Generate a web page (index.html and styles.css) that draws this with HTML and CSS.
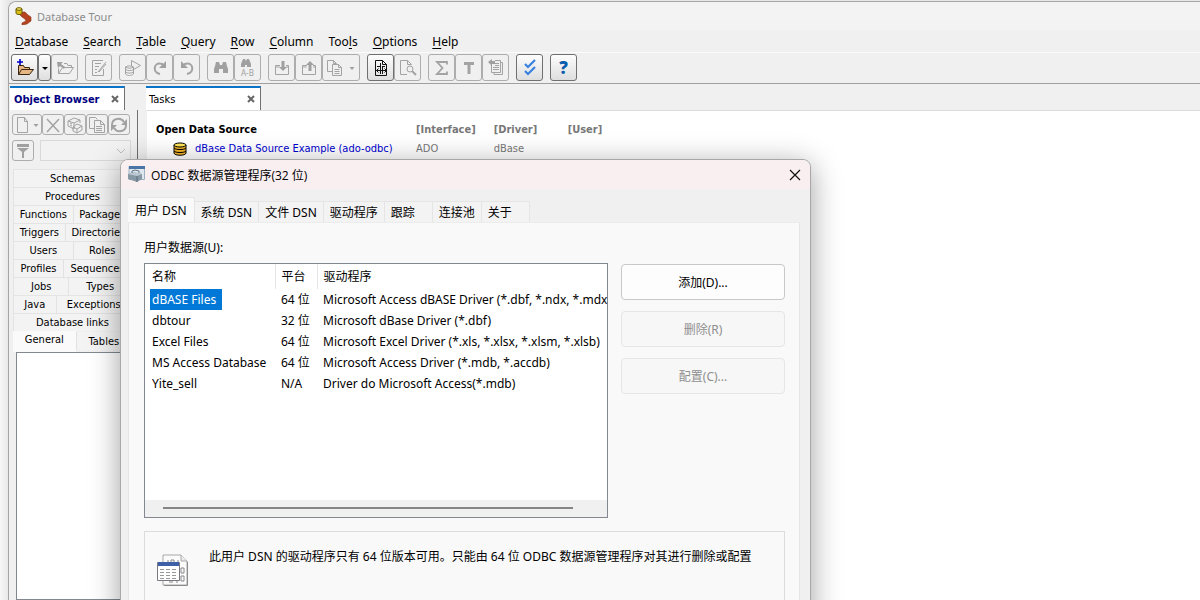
FILE: index.html
```html
<!DOCTYPE html>
<html lang="zh-CN">
<head>
    <meta charset="UTF-8">
    <meta name="viewport" content="width=device-width, initial-scale=1.0">
    <title>Database Tour</title>
    <link rel="stylesheet" href="styles.css">
</head>
<body>
    <div class="app">
        <header class="titlebar">
            <svg width="18" height="18" viewBox="0 0 18 18">
                <path d="M6 5h4l3 3 3 2v4l-4 3-5 1v-2l4-2-1-2-3-2-2-2z" fill="#b5431f" stroke="#8c3216" stroke-width=".6"/>
                <path d="M1 2v4c0 2 6 2 6 0V2" fill="#d8c018" stroke="#6b5c00"/>
                <ellipse cx="4" cy="2" rx="3" ry="1.3" fill="#f5e860" stroke="#6b5c00"/>
            </svg>
            <span>Database Tour</span>
        </header>

        <nav class="menu">
            <button><u>D</u>atabase</button>
            <button><u>S</u>earch</button>
            <button><u>T</u>able</button>
            <button><u>Q</u>uery</button>
            <button><u>R</u>ow</button>
            <button><u>C</u>olumn</button>
            <button>Too<u>l</u>s</button>
            <button><u>O</u>ptions</button>
            <button><u>H</u>elp</button>
        </nav>

        <div class="toolbar">
            <div class="group">
                <button class="tool active" aria-label="Open">
                    <svg viewBox="0 0 18 18"><path d="M2.500 15.500v-9h5l1 2h5v2M2.500 15.500l3-5h12l-4 5z" fill="#e3b684" stroke="#3a2410"/><path d="M4 0v6M1 3h6" stroke="#0000c8" stroke-width="1.600"/></svg>
                </button>
                <button class="tool active narrow" aria-label="Open menu">
                    <svg viewBox="0 0 8 18"><path d="M1 8h6L4 11z" fill="#000"/></svg>
                </button>
                <button class="tool" disabled aria-label="Close database">
                    <svg viewBox="0 0 18 18"><path d="M2.500 14.500v-5M8 4.500h3l1 2h3.500v2M2.500 14.500l4-6h11l-4 6z"/><path d="M1 3h6L5 5l4 3-1 2-4-3-2 2z" class="solid"/></svg>
                </button>
            </div>
            <div class="group">
                <button class="tool" disabled aria-label="Edit">
                    <svg viewBox="0 0 18 18"><path d="M13 1.500H2.500v15h11V10M5 4.500h6M5 7.500h4M5 10.500h2M5 13.500h2M8 13l8-10M9 13l7-8"/></svg>
                </button>
            </div>
            <div class="group">
                <button class="tool" disabled aria-label="Run">
                    <svg viewBox="0 0 18 18"><path d="M7.500 7V1.500l9 5-7 4M1.500 8v7c2 2 6 2 8 0V8M1.500 8c2-1.500 6-1.500 8 0-2 1.500-6 1.500-8 0M1.500 10.500c2 1.500 6 1.500 8 0M1.500 13c2 1.500 6 1.500 8 0"/></svg>
                </button>
                <button class="tool" disabled aria-label="Redo">
                    <svg viewBox="0 0 18 18"><path d="M9 15C1 13 3 4 9 4.500c2 0 3 1 4 2" stroke-width="2"/><path d="M15 2v7H8z" class="solid"/></svg>
                </button>
                <button class="tool" disabled aria-label="Undo">
                    <svg viewBox="0 0 18 18"><path d="M9 15c8-2 6-11 0-10.500-2 0-3 1-4 2" stroke-width="2"/><path d="M3 2v7h7z" class="solid"/></svg>
                </button>
            </div>
            <div class="group">
                <button class="tool" disabled aria-label="Find">
                    <svg viewBox="0 0 18 18"><path d="M4 3h3l1 3h2l1-3h3l1 4 1 3v4h-5v-4H7v4H2v-4l1-3z" class="solid"/></svg>
                </button>
                <button class="tool" disabled aria-label="Replace">
                    <svg viewBox="0 0 18 18"><path d="M4 0h2l1 2 1-2h2l2 5v3H8V6H6v2H2V5z" class="solid"/><text x="2" y="17" class="tiny">A-B</text></svg>
                </button>
            </div>
            <div class="group">
                <button class="tool" disabled aria-label="Import">
                    <svg viewBox="0 0 18 18"><path d="M7 6.500H2.500v9h13v-9H13M2.500 8h4M13 8h3"/><path d="M8.500 2h3v6H14l-4 4-4-4h2.500z" class="solid"/></svg>
                </button>
                <button class="tool" disabled aria-label="Export">
                    <svg viewBox="0 0 18 18"><path d="M7 6.500H2.500v9h13v-9H13M2.500 8h4M13 8h3"/><path d="M8.500 12h3V6H14l-4-4-4 4h2.500z" class="solid"/></svg>
                </button>
                <button class="tool wide" disabled aria-label="Copy">
                    <svg viewBox="0 0 18 18"><path d="M6 12.500H1.500v-11h6l3 3M7.500 1.500v3h3M6.500 5.500h6l3 3v8h-9zM12.500 5.500v3h3M8.500 10.500h5M8.500 12.500h5M8.500 14.500h5"/></svg>
                    <svg class="caret" viewBox="0 0 8 18"><path d="M1.500 8h5L4 11z" class="solid"/></svg>
                </button>
            </div>
            <div class="group">
                <button class="tool active" aria-label="Structure">
                    <svg viewBox="0 0 18 18"><path d="M3.500 1.500h7l4 4v11h-11zM10.500 1.500v4h4M5 7.500h3M10 7.500h3M8.500 4v11M10.500 8v7M4 11.500h11M6.500 9.500l-2 2 2 2M12.500 9.500l2 2-2 2" fill="none" stroke="#111"/></svg>
                </button>
                <button class="tool" disabled aria-label="Preview">
                    <svg viewBox="0 0 18 18"><path d="M8 15.500H1.500v-14h7l4 4M8.500 1.500v4h4"/><circle cx="11" cy="10" r="3"/><path d="M13 12l4 4" stroke-width="2"/></svg>
                </button>
            </div>
            <div class="group">
                <button class="tool" disabled aria-label="Sum">
                    <svg viewBox="0 0 18 18"><path d="M14 5.500V3H4l5.500 6L4 15h10v-2.500" stroke-width="1.800"/></svg>
                </button>
                <button class="tool" disabled aria-label="Text">
                    <svg viewBox="0 0 18 18"><path d="M4 4.500h10M9 4v11" stroke-width="3"/></svg>
                </button>
                <button class="tool" disabled aria-label="Report">
                    <svg viewBox="0 0 18 18"><path d="M4.500 5v8.500h9V1.500H8M13.500 3.500h2v12H7v-2M6 8.500h6M6 10.500h6M8 4.500h4M8 6.500h4"/><path d="M1 3l4-3v2h3v3H5v2z" class="solid"/></svg>
                </button>
            </div>
            <div class="group">
                <button class="tool active" aria-label="Check">
                    <svg viewBox="0 0 18 18"><path d="M4 5l3 3 7-7M4 12l3 3 7-7" fill="none" stroke="#3a82e0" stroke-width="2.200"/></svg>
                </button>
            </div>
            <div class="group">
                <button class="tool active help" aria-label="Help">?</button>
            </div>
        </div>

        <div class="workspace">
            <aside class="side">
                <div class="dock-tab"><b>Object Browser</b><button aria-label="Close browser"><svg viewBox="0 0 8 8"><path d="M1 1l6 6M7 1L1 7"/></svg></button></div>
                <div class="side-body">
                    <div class="side-tools">
                        <button class="small new" disabled aria-label="New"><svg viewBox="0 0 18 18"><path d="M3.500 1.500h7l3 4v11h-10zM10.500 1.500v4h3"/></svg><svg class="caret" viewBox="0 0 8 18"><path d="M1.500 8h5L4 11z" class="solid"/></svg></button>
                        <button class="small" disabled aria-label="Delete"><svg viewBox="0 0 18 18"><path d="M3 3l12 13M15 3L3 16" stroke-width="1.500"/></svg></button>
                        <button class="small" disabled aria-label="Objects"><svg viewBox="0 0 18 18"><path d="M2 5l6-3 6 2-6 3zM2 5v5l6 3V7M14 4v3M7 11l4-3 5 2v4l-5 3-4-2zM7 11l4 2 5-3M11 13v4M4 7l2 1M4 9l2 1"/></svg></button>
                        <button class="small" disabled aria-label="Copy object"><svg viewBox="0 0 18 18"><path d="M6 12.500H1.500v-11h6l2 2M6.500 4.500h6l4 4v8h-10zM12.500 4.500v4h4M8 10.500h6M8 12.500h6M8 14.500h6"/></svg></button>
                        <button class="small" disabled aria-label="Refresh"><svg viewBox="0 0 18 18"><path d="M2 9c0-7 9-8 12-3M16 9c0 7-9 8-12 3" stroke-width="2"/><path d="M17 3v6h-6zM1 15V9h6z" class="solid"/></svg></button>
                    </div>
                    <div class="filter">
                        <button class="small" disabled aria-label="Filter"><svg viewBox="0 0 18 18"><path d="M3 2h12v3H3zM3 6h12l-5 4v6H8v-6z" class="solid"/></svg></button>
                        <select disabled aria-label="Filter by"><option></option></select>
                    </div>
                    <div class="kinds">
                        <div><button>Schemas</button></div>
                        <div><button>Procedures</button></div>
                        <div><button>Functions</button><button>Packages</button></div>
                        <div><button>Triggers</button><button>Directories</button></div>
                        <div><button>Users</button><button>Roles</button></div>
                        <div><button>Profiles</button><button>Sequences</button></div>
                        <div><button>Jobs</button><button>Types</button></div>
                        <div><button>Java</button><button>Exceptions</button></div>
                        <div><button>Database links</button></div>
                        <div class="last"><button class="current">General</button><button>Tables</button></div>
                    </div>
                    <div class="tree"></div>
                </div>
            </aside>

            <main class="tasks">
                <div class="dock-tab"><span>Tasks</span><button aria-label="Close tasks"><svg viewBox="0 0 8 8"><path d="M1 1l6 6M7 1L1 7"/></svg></button></div>
                <div class="page">
                    <table class="sources">
                        <tr><th class="name">Open Data Source</th><th>[Interface]</th><th>[Driver]</th><th>[User]</th></tr>
                        <tr>
                            <td class="name">
                                <svg width="14" height="14" viewBox="0 0 14 14"><path d="M1 3v8c0 3 12 3 12 0V3" fill="#f4b428" stroke="#000"/><ellipse cx="7" cy="3" rx="6" ry="2" fill="#ffe458" stroke="#000"/><path d="M1 6c1 2 11 2 12 0M1 9c1 2 11 2 12 0" fill="none" stroke="#000"/></svg>
                                <a href="#">dBase Data Source Example (ado-odbc)</a>
                            </td>
                            <td>ADO</td><td>dBase</td><td></td>
                        </tr>
                    </table>
                </div>
            </main>
        </div>
    </div>

    <div class="dialog" role="dialog" aria-labelledby="dialogTitle">
        <div class="dialog-title">
            <svg width="17" height="17" viewBox="0 0 17 17">
                <path d="M1 .5h15.500v13H1z" fill="#dfe7ee" stroke="#9db0c2"/>
                <path d="M1 0h16v3H1z" fill="#4a74a6"/>
                <path d="M0 8l5-2 9 2v5l-5 3-9-3z" fill="#8797a4"/>
                <path d="M0 8l5-2 9 2-5 2z" fill="#bcc8d1"/>
                <path d="M9 10v6" stroke="#5c6e7c"/>
                <path d="M4 7V5l3-1 4 1v2" fill="none" stroke="#62727f"/>
            </svg>
            <span id="dialogTitle">ODBC 数据源管理程序(32 位)</span>
            <button aria-label="关闭"><svg width="12" height="12" viewBox="0 0 12 12"><path d="M1 1l10 10M11 1L1 11" stroke="#111" stroke-width="1.200"/></svg></button>
        </div>
        <div class="dialog-tabs">
            <button class="current">用户 DSN</button>
            <button>系统 DSN</button>
            <button>文件 DSN</button>
            <button>驱动程序</button>
            <button class="pad">跟踪</button>
            <button>连接池</button>
            <button class="pad">关于</button>
        </div>
        <div class="dialog-page">
            <p class="label" id="listLabel">用户数据源(U):</p>
            <div class="columns">
                <div class="list">
                    <table aria-labelledby="listLabel">
                        <thead>
                            <tr><th class="c-name">名称</th><th class="c-bits">平台</th><th>驱动程序</th></tr>
                        </thead>
                        <tbody>
                            <tr><td><span class="selected">dBASE Files</span></td><td>64 位</td><td>Microsoft Access dBASE Driver (*.dbf, *.ndx, *.mdx)</td></tr>
                            <tr><td>dbtour</td><td>32 位</td><td>Microsoft dBase Driver (*.dbf)</td></tr>
                            <tr><td>Excel Files</td><td>64 位</td><td>Microsoft Excel Driver (*.xls, *.xlsx, *.xlsm, *.xlsb)</td></tr>
                            <tr><td>MS Access Database</td><td>64 位</td><td>Microsoft Access Driver (*.mdb, *.accdb)</td></tr>
                            <tr><td>Yite_sell</td><td>N/A</td><td>Driver do Microsoft Access(*.mdb)</td></tr>
                        </tbody>
                    </table>
                    <div class="scroll"><div class="thumb"></div></div>
                </div>
                <div class="actions">
                    <button>添加(D)...</button>
                    <button disabled>删除(R)</button>
                    <button disabled>配置(C)...</button>
                </div>
            </div>
            <div class="info">
                <svg width="32" height="32" viewBox="0 0 32 32">
                    <path d="M6 1h18l6 6v24H6z" fill="#fbfbfb" stroke="#a8a8a8"/>
                    <path d="M24 1v6h6" fill="#ececec" stroke="#a8a8a8"/>
                    <path d="M30.500 8v23.500H7" fill="none" stroke="#8a8a8a"/>
                    <path d="M11 6v4M14 6h3v4h-3zM21 6v4M24 14h3v5h-3zM24 22h3v5h-3zM20 26v3M12 28h4" fill="none" stroke="#888"/>
                    <path d="M.5 8.500h22v18H.5z" fill="#fff" stroke="#76797f"/>
                    <path d="M1 8h21v4H1z" fill="#3c5fa5"/>
                    <path d="M3 15.500h4m2 0h4m2 0h4M3 18.500h4m2 0h4m2 0h4M3 21.500h4m2 0h4m2 0h4M3 24.500h4m2 0h4m2 0h4" stroke="#999"/>
                </svg>
                <p>此用户 DSN 的驱动程序只有 64 位版本可用。只能由 64 位 ODBC 数据源管理程序对其进行删除或配置</p>
            </div>
        </div>
    </div>
</body>
</html>
```
FILE: styles.css
```css
* {
    box-sizing: border-box;
}
body {
    margin: 0;
    height: 100vh;
    overflow: hidden;
    position: relative;
    padding: 1px 0 0 8px;
    background: linear-gradient(to right, #f7f7f7, #e8e8e8 8px);
    font-family: "Noto Sans", "Noto Sans CJK SC", sans-serif;
    font-size: 12px;
    color: #000;
}
button {
    font: inherit;
    color: inherit;
    padding: 0;
    margin: 0;
    border: none;
    background: none;
    white-space: nowrap;
}
p {
    margin: 0;
}
svg {
    flex: none;
}

/* main window */
.app {
    height: 100%;
    display: flex;
    flex-direction: column;
    background: #f0f0f0;
    border-top: 1px solid #a5a5a5;
    border-left: 1px solid #a5a5a5;
    border-top-left-radius: 8px;
}
.titlebar {
    display: flex;
    align-items: center;
    gap: 4px;
    height: 28px;
    padding-left: 6px;
    background: #f3f3f3;
    border-top-left-radius: 8px;
    color: #8c8c8c;
    font-size: 11px;
}
.menu {
    display: flex;
    gap: 15px;
    height: 22px;
    padding-left: 6px;
}
.menu u {
    text-underline-offset: 2px;
}
.toolbar {
    display: flex;
    gap: 7px;
    padding: 1px 2px;
    height: 32px;
    border-top: 1px solid #fafafa;
    border-bottom: 1px solid #a0a0a0;
}
.group {
    display: flex;
}
.tool,
.small {
    display: flex;
    align-items: center;
    justify-content: center;
    width: 27px;
    height: 27px;
    border: 1px solid #adadad;
    border-radius: 3px;
}
.tool svg,
.small svg {
    width: 18px;
    height: 18px;
}
.tool:disabled svg,
.small svg {
    fill: none;
    stroke: #a3a3a3;
}
.tool .caret,
.small .caret,
.narrow svg {
    width: 8px;
}
.solid {
    fill: #a0a0a0;
    stroke: none;
}
.tiny {
    font-size: 8px;
    fill: #a0a0a0;
    stroke: none;
}
.active {
    border-color: #707070;
    background: linear-gradient(#fdfdfd, #dedede);
}
.narrow {
    width: 13px;
}
.wide {
    width: 38px;
    gap: 4px;
}
.help {
    font-size: 17px;
    font-weight: 900;
    color: #0b5cad;
}

/* docked panels */
.workspace {
    flex: 1;
    min-height: 0;
    display: flex;
    gap: 8px;
    padding-top: 2px;
    font-family: "DejaVu Sans Condensed", "DejaVu Sans", sans-serif;
    font-size: 11px;
}
.side {
    width: 129px;
    display: flex;
    flex-direction: column;
}
.dock-tab {
    display: flex;
    align-items: center;
    justify-content: space-between;
    width: 115px;
    height: 24px;
    margin-left: 1px;
    padding: 0 5px 0 4px;
    background: #fff;
    border-top: 2px solid #0b74c9;
    border-right: 1px solid #707070;
}
.dock-tab b {
    color: #000080;
}
.dock-tab svg {
    display: block;
    width: 8px;
    height: 8px;
    stroke: #666;
    stroke-width: 2;
}
.side-body {
    flex: 1;
    display: flex;
    flex-direction: column;
    padding: 4px 6px 0 3px;
    border-right: 1px solid #707070;
}
.side-tools {
    display: flex;
}
.small {
    width: 22px;
    height: 21px;
}
.small.new {
    width: 30px;
}
.filter {
    display: flex;
    gap: 6px;
    margin: 5px 0 8px;
}
.filter select {
    flex: 1;
    appearance: none;
    border: 1px solid #d0d0d0;
    border-radius: 0;
    background: #f3f3f3 url("data:image/svg+xml,%3Csvg xmlns='http://www.w3.org/2000/svg' width='10' height='6'%3E%3Cpath d='M1 1l4 4 4-4' fill='none' stroke='%23aaa'/%3E%3C/svg%3E") right 4px center no-repeat;
}
.kinds > div {
    display: flex;
    height: 18px;
    margin-left: 1px;
    border-top: 1px solid #e4e4e4;
    border-left: 1px solid #e4e4e4;
    background: #f3f3f3;
}
.kinds button {
    flex: 1 0 auto;
    padding: 0 4px;
}
.kinds button + button {
    border-left: 1px solid #e2e2e2;
}
.kinds .last {
    height: 21px;
    align-items: flex-end;
    border: none;
    background: none;
}
.kinds .last button {
    height: 18px;
    margin-bottom: 2px;
    background: #f3f3f3;
}
.kinds .last .current {
    height: 21px;
    margin: 0;
    padding-bottom: 5px;
    background: #fafafa;
}
.tree {
    flex: 1;
    margin-left: 4px;
    border: 1px solid #828790;
    background: #fff;
}
.tasks {
    flex: 1;
    min-width: 0;
    display: flex;
    flex-direction: column;
}
.tasks .dock-tab {
    margin-left: 0;
    padding-left: 3px;
}
.page {
    flex: 1;
    margin-left: 1px;
    padding: 9px;
    background: #fff;
    border-top: 1px solid #dcdcdc;
}
.sources {
    border-collapse: collapse;
    color: #777;
}
.sources th,
.sources td {
    height: 19px;
    min-width: 74px;
    padding: 0 18px 0 0;
    text-align: left;
    white-space: nowrap;
}
.sources th.name {
    width: 260px;
    color: #000;
}
.sources td.name {
    display: flex;
    align-items: center;
    gap: 8px;
    padding: 0 0 0 17px;
}
.sources a {
    color: #0000d0;
    text-decoration: none;
}

/* ODBC dialog, floats over the main window */
.dialog {
    position: absolute;
    left: 120px;
    top: 159px;
    width: 691px;
    padding: 0 10px 10px 7px;
    background: #f0f0f0;
    border: 1px solid #a8a8a8;
    border-radius: 8px;
    box-shadow: 0 6px 30px rgba(0, 0, 0, 0.38);
}
.dialog-title {
    display: flex;
    align-items: center;
    gap: 6px;
    height: 29px;
    margin: 0 -10px 0 -7px;
    padding: 0 9px 0 7px;
    background: #f9eff1;
    border-radius: 7px 7px 0 0;
    font-family: "Open Sans", "Noto Sans CJK SC", sans-serif;
}
.dialog-title button {
    margin-left: auto;
}
.dialog-title button svg {
    display: block;
}
.dialog-tabs {
    display: flex;
    align-items: flex-end;
    height: 33px;
}
.dialog-tabs button {
    height: 21px;
    padding: 0 6px;
    background: #f3f3f3;
    border: 1px solid #e5e5e5;
    border-width: 1px 1px 0 0;
}
.dialog-tabs .current {
    height: 25px;
    padding: 0 7px;
    background: #f9f9f9;
}
.dialog-tabs .pad {
    padding-right: 17px;
}
.dialog-page {
    padding: 16px 14px 20px 15px;
    background: #f9f9f9;
    border: 1px solid #e5e5e5;
    border-top-color: #ececec;
}
.label {
    line-height: 18px;
    margin-bottom: 6px;
}
.columns {
    display: flex;
    gap: 13px;
}
.list {
    flex: 1;
    min-width: 0;
    height: 255px;
    display: flex;
    flex-direction: column;
    justify-content: space-between;
    background: #fff;
    border: 1px solid #828790;
}
.list table {
    width: 100%;
    table-layout: fixed;
    border-collapse: collapse;
}
.list th,
.list td {
    height: 21px;
    padding: 0 0 0 6px;
    line-height: 21px;
    text-align: left;
    font-weight: normal;
    white-space: nowrap;
    overflow: hidden;
}
.list th {
    height: 25px;
    border-right: 1px solid #e5e5e5;
}
.list th:last-child {
    border-right: none;
}
.list td:first-child,
.list th:first-child {
    padding-left: 7px;
}
.list td:first-child:has(.selected) {
    padding-left: 5px;
}
.c-name {
    width: 130px;
}
.c-bits {
    width: 42px;
}
.selected {
    display: inline-block;
    padding: 0 6px 0 2px;
    background: #0078d7;
    color: #fff;
}
.scroll {
    height: 17px;
    padding: 7px 34px 0 18px;
    background: #f0f0f0;
}
.thumb {
    height: 2px;
    background: #858585;
}
.actions {
    display: flex;
    flex-direction: column;
    gap: 11px;
    width: 164px;
    padding-top: 1px;
}
.actions button {
    height: 36px;
    background: #fdfdfd;
    border: 1px solid #c8c8c8;
    border-radius: 4px;
}
.actions button:disabled {
    background: #f7f7f7;
    border-color: #e6e6e6;
    color: #8f8f8f;
}
.info {
    display: flex;
    gap: 20px;
    min-height: 120px;
    margin-top: 13px;
    padding: 15px 12px;
    border: 1px solid #dcdcdc;
}
.info svg {
    margin-top: 7px;
}
.info p {
    line-height: 20px;
}
```
